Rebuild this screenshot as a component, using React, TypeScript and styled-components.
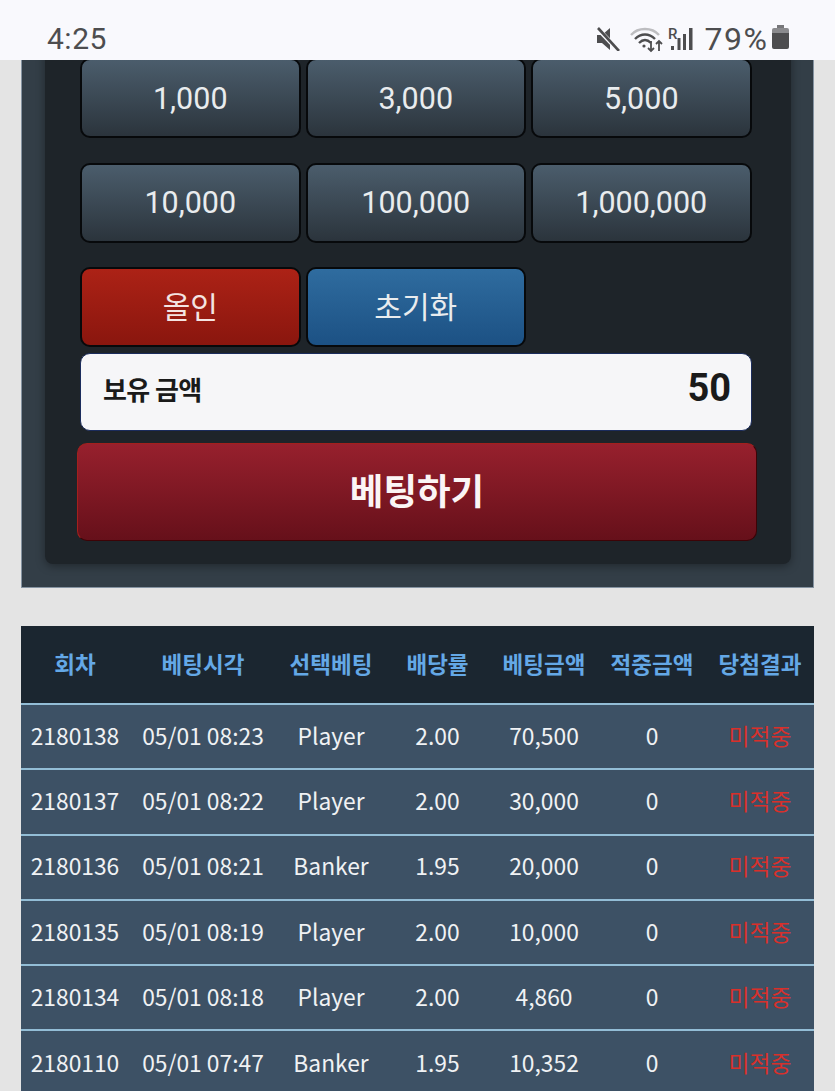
import styled, { createGlobalStyle } from "styled-components";

const GlobalStyle = createGlobalStyle`
  html, body {
    margin: 0;
    padding: 0;
    background: #e4e4e4;
  }
  * { box-sizing: border-box; }
`;

const Screen = styled.div`
  width: 835px;
  height: 1091px;
  overflow: hidden;
  display: flex;
  flex-direction: column;
  background: #e4e4e4;
  font-family: Roboto, "Noto Sans CJK KR", sans-serif;
`;

const StatusBar = styled.div`
  flex: none;
  height: 60px;
  background: #f9f9fd;
  display: flex;
  align-items: flex-start;
  justify-content: space-between;
  padding: 21px 46px 0 47px;
  color: #4d4d4f;
  position: relative;
  z-index: 1;
`;

const Clock = styled.span`
  font-size: 30px;
  line-height: 35px;
  letter-spacing: 0.5px;
`;

const StatusIcons = styled.div`
  display: flex;
  align-items: flex-start;
`;

const Battery = styled.span`
  font-size: 32px;
  line-height: 36px;
  letter-spacing: 1.6px;
  margin: 0 3.4px 0 10px;
`;

const Content = styled.div`
  flex: 1;
  min-height: 0;
  overflow: hidden;
  padding: 0 21px;
`;

const Panel = styled.section`
  height: 558px;
  margin-top: -30px;
  padding: 0 22px 23px 23px;
  background: #333e47;
  border: 1px solid #8593a1;
  border-top: 0;
`;

const Inner = styled.div`
  height: 100%;
  background: #1e2429;
  border-radius: 0 0 8px 8px;
  box-shadow: 0 2px 10px rgba(0, 0, 0, 0.38);
  padding: 28px 39px 22px 35px;
  display: flex;
  flex-direction: column;
`;

const ChipGrid = styled.div`
  flex: none;
  display: grid;
  grid-template-columns: repeat(3, 220.5px);
  grid-auto-rows: 80px;
  column-gap: 5px;
  row-gap: 24.5px;
`;

const Chip = styled.button<{ $tone?: "steel" | "red" | "blue" }>`
  border: 2px solid #07090b;
  border-radius: 10px;
  color: ${(p) => (p.$tone === "red" ? "#f4e4e2" : "#e9ecee")};
  font-family: inherit;
  font-size: ${(p) => (p.$tone ? "30px" : "30.5px")};
  padding: 0 0 ${(p) => (p.$tone ? "4px" : "0")};
  background: ${(p) =>
    p.$tone === "red"
      ? "linear-gradient(#ac2216, #8a160e)"
      : p.$tone === "blue"
        ? "linear-gradient(#2f6c9f, #1c5184)"
        : "linear-gradient(#4b5d6c, #2b343c)"};
`;

const BalanceRow = styled.div`
  flex: none;
  height: 78px;
  margin-top: 6px;
  width: 672px;
  background: #f6f6f8;
  border: 1px solid #1b2c5c;
  border-radius: 10px;
  display: flex;
  align-items: center;
  justify-content: space-between;
  padding: 0 20px 8px 22px;
  color: #1a1a1a;
`;

const BalanceLabel = styled.span`
  font-family: "Noto Sans CJK KR", sans-serif;
  font-size: 26px;
  font-weight: 700;
  letter-spacing: -0.6px;
`;

const BalanceValue = styled.span`
  font-size: 38px;
  font-weight: 700;
`;

const BetButton = styled.button`
  height: 98px;
  width: 680px;
  margin: 12px 0 0 -3px;
  flex: none;
  border: 1px solid #3d0306;
  border-top-color: #a3201d;
  border-left-color: #a3201d;
  border-radius: 10px;
  background: linear-gradient(#97202d, #66101a);
  color: #fbf5f5;
  font-family: "Noto Sans CJK KR", sans-serif;
  font-size: 36.5px;
  font-weight: 700;
  padding: 0 0 5px;
`;

const HistoryTable = styled.table`
  width: 793px;
  margin-top: 38px;
  border-collapse: collapse;
  table-layout: fixed;
  font-family: "Noto Sans CJK KR", sans-serif;
`;

const HeadCell = styled.th`
  height: 78px;
  padding: 0 0 4px;
  background: #1b2630;
  color: #64a8e6;
  font-size: 22.5px;
  font-weight: 700;
  text-align: center;
  white-space: nowrap;
`;

const Row = styled.tr`
  height: 65.3px;
  background: #3d5165;
  border-top: 2px solid #93bdd6;
`;

const Cell = styled.td<{ $miss?: boolean }>`
  padding: 0 0 3px;
  color: ${(p) => (p.$miss ? "#d8302b" : "#f0f2f4")};
  font-size: 22.8px;
  text-align: center;
  white-space: nowrap;
`;

const widths = [108, 148, 108, 105, 108, 108, 108];
const headers = ["회차", "베팅시각", "선택베팅", "배당률", "베팅금액", "적중금액", "당첨결과"];
const rows = [
  ["2180138", "05/01 08:23", "Player", "2.00", "70,500", "0"],
  ["2180137", "05/01 08:22", "Player", "2.00", "30,000", "0"],
  ["2180136", "05/01 08:21", "Banker", "1.95", "20,000", "0"],
  ["2180135", "05/01 08:19", "Player", "2.00", "10,000", "0"],
  ["2180134", "05/01 08:18", "Player", "2.00", "4,860", "0"],
  ["2180110", "05/01 07:47", "Banker", "1.95", "10,352", "0"],
];

function MuteIcon() {
  return (
    <svg width="24" height="24" viewBox="0 0 24 24" style={{ marginTop: 6 }}>
      <path d="M1 8h5l8-7v22l-8-7H1z" fill="#4d4d4f" />
      <path d="M1 1l22 23" stroke="#f9f9fd" strokeWidth="4.5" />
      <path d="M2 1l21 23" stroke="#4d4d4f" strokeWidth="2.6" />
    </svg>
  );
}

function WifiIcon() {
  return (
    <svg width="34" height="27" viewBox="0 0 34 27" fill="none" style={{ marginLeft: 10, marginTop: 5 }}>
      <path d="M1 9C8 1 22 1 29 9" stroke="#bdbdc0" strokeWidth="2.4" />
      <path d="M5 13c6-6 14-6 20 0" stroke="#4d4d4f" strokeWidth="2.4" />
      <path d="M9 17c4-4 8-4 12 0" stroke="#4d4d4f" strokeWidth="2.4" />
      <circle cx="14" cy="20" r="1.6" fill="#4d4d4f" />
      <path d="M21 15v10m-3-3l3 3 3-3" stroke="#4d4d4f" strokeWidth="1.8" />
      <path d="M29 25V15m-3 3l3-3 3 3" stroke="#4d4d4f" strokeWidth="1.8" />
    </svg>
  );
}

function SignalIcon() {
  return (
    <svg
      width="26"
      height="24"
      viewBox="0 0 26 24"
      overflow="visible"
      style={{ marginLeft: 4, marginTop: 6 }}
    >
      <text x="0" y="12" fontFamily="Roboto, sans-serif" fontSize="15" fontWeight="500" fill="#4d4d4f">
        R
      </text>
      <rect x="3" y="19" width="3" height="4" fill="#4d4d4f" />
      <rect x="9.5" y="11" width="3" height="12" fill="#4d4d4f" />
      <rect x="15" y="7" width="3" height="16" fill="#4d4d4f" />
      <rect x="21" y="1" width="3.5" height="22" fill="#4d4d4f" />
    </svg>
  );
}

function BatteryIcon() {
  return (
    <svg width="17" height="24" viewBox="0 0 17 24" style={{ marginTop: 4 }}>
      <path d="M5 0h7v3H5z" fill="#77777a" />
      <path d="M2 3h13a2 2 0 0 1 2 2v3H0V5a2 2 0 0 1 2-2z" fill="#8a8a8d" />
      <path d="M0 8h17v14a2 2 0 0 1-2 2H2a2 2 0 0 1-2-2z" fill="#4d4d4f" />
    </svg>
  );
}

function App() {
  return (
    <Screen>
      <GlobalStyle />
      <StatusBar>
        <Clock>4:25</Clock>
        <StatusIcons>
          <MuteIcon />
          <WifiIcon />
          <SignalIcon />
          <Battery>79%</Battery>
          <BatteryIcon />
        </StatusIcons>
      </StatusBar>
      <Content>
        <Panel>
          <Inner>
            <ChipGrid>
              <Chip>1,000</Chip>
              <Chip>3,000</Chip>
              <Chip>5,000</Chip>
              <Chip>10,000</Chip>
              <Chip>100,000</Chip>
              <Chip>1,000,000</Chip>
              <Chip $tone="red">올인</Chip>
              <Chip $tone="blue">초기화</Chip>
            </ChipGrid>
            <BalanceRow>
              <BalanceLabel>보유 금액</BalanceLabel>
              <BalanceValue>50</BalanceValue>
            </BalanceRow>
            <BetButton>베팅하기</BetButton>
          </Inner>
        </Panel>
        <HistoryTable>
          <colgroup>
            {widths.map((w, i) => (
              <col key={i} width={w} />
            ))}
          </colgroup>
          <thead>
            <tr>
              {headers.map((h) => (
                <HeadCell key={h}>{h}</HeadCell>
              ))}
            </tr>
          </thead>
          <tbody>
            {rows.map((r) => (
              <Row key={r[0]}>
                {r.map((c, i) => (
                  <Cell key={i}>{c}</Cell>
                ))}
                <Cell $miss>미적중</Cell>
              </Row>
            ))}
          </tbody>
        </HistoryTable>
      </Content>
    </Screen>
  );
}

export default App;
